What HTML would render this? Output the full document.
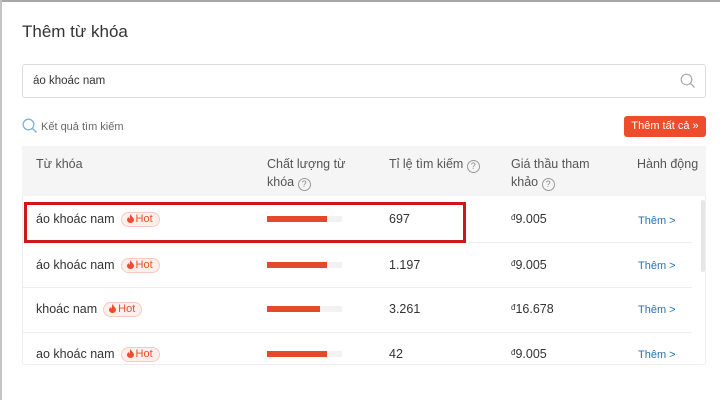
<!DOCTYPE html>
<html><head><meta charset="utf-8"><style>
*{margin:0;padding:0;box-sizing:border-box}
body{width:720px;height:400px;overflow:hidden;background:#fff;font-family:"Liberation Sans",Arial,sans-serif;color:#333;position:relative}
.a{position:absolute;white-space:nowrap}
.topbar{left:0;top:0;width:720px;height:2px;background:#a8a8a8}
.leftbar{left:0;top:0;width:2px;height:400px;background:#c4c4c4}
.title{left:22px;top:22px;font-size:17px;color:#333}
.search{left:22px;top:64px;width:684px;height:34px;border:1px solid #ddd;border-radius:3px}
.stext{left:33px;top:75px;font-size:11.5px;color:#333}
.kq{left:41px;top:121px;font-size:11px;color:#666}
.btn{left:624px;top:116px;width:82px;height:21px;background:#ee4d2d;border-radius:3px;color:#fff;font-size:11px;line-height:21px;text-align:center}
.table{left:22px;top:146px;width:684px;height:219px;border:1px solid #eee;border-radius:3px}
.head{left:22px;top:146px;width:684px;height:50px;background:#f5f5f5}
.h{font-size:12.5px;color:#555;line-height:18px}
.q{display:inline-block;width:13px;height:13px;border:1px solid #999;border-radius:50%;font-size:9px;line-height:11px;text-align:center;color:#888;vertical-align:-1px}
.sep{left:22px;width:670px;height:1px;background:#eee}
.cell{font-size:12.5px;color:#333}
.hot{display:inline-block;margin-left:6px;height:15px;padding:0 6px 0 5px;border:1px solid #f6c9bd;border-radius:8px;background:#fdf0ec;color:#ee4d2d;font-size:11px;line-height:13px;vertical-align:1px}
.hot svg{vertical-align:-1px;margin-right:2px}
.bar{height:6px;background:#f2f2f2;width:75px}
.bar i{display:block;height:6px;background:#e4492b}
.them{font-size:11px;color:#2673b8}
.scroll{left:701px;top:200px;width:4px;height:72px;background:#e6e6e6;border-radius:2px}
.red{left:24px;top:202px;width:442px;height:41px;border:3px solid #d0161c}
</style></head><body>
<div class="a topbar"></div><div class="a leftbar"></div>
<div class="a title">Thêm từ khóa</div>
<div class="a search"></div>
<div class="a stext">áo khoác nam</div>
<svg class="a" style="left:680px;top:73px" width="16" height="16" viewBox="0 0 16 16"><circle cx="6.5" cy="6.5" r="5.3" fill="none" stroke="#aaa" stroke-width="1.2"/><path d="M10.5 10.5L14.5 14.5" stroke="#aaa" stroke-width="1.3"/></svg>
<svg class="a" style="left:22px;top:118px" width="16" height="16" viewBox="0 0 16 16"><circle cx="6.5" cy="6.5" r="5.3" fill="none" stroke="#7fb2da" stroke-width="1.3"/><path d="M10.5 10.5L14.5 14.5" stroke="#7fb2da" stroke-width="1.4"/></svg>
<div class="a kq">Kết quả tìm kiếm</div>
<div class="a btn">Thêm tất cả »</div>
<div class="a table"></div>
<div class="a head"></div>
<div class="a h" style="left:36px;top:155px">Từ khóa</div>
<div class="a h" style="left:267px;top:155px">Chất lượng từ<br>khóa <span class="q">?</span></div>
<div class="a h" style="left:389px;top:155px">Tỉ lệ tìm kiếm <span class="q">?</span></div>
<div class="a h" style="left:511px;top:155px">Giá thầu tham<br>khảo <span class="q">?</span></div>
<div class="a h" style="left:637px;top:155px">Hành động</div>

<div class="a cell" style="left:36px;top:212px">áo khoác nam<span class="hot"><svg width="7" height="9" viewBox="0 0 7 9"><path d="M3.5 0C4 2 7 3.5 7 6A3.5 3 0 0 1 0 6C0 4.5 1 3.5 1.5 3C1.7 4 2.3 4.5 2.8 4.5C2.5 3 3 1.5 3.5 0Z" fill="#ee4d2d"/></svg>Hot</span></div>
<div class="a bar" style="left:267px;top:216px"><i style="width:60px"></i></div>
<div class="a cell" style="left:389px;top:212px">697</div>
<div class="a cell" style="left:511px;top:212px"><small style="font-size:8px;vertical-align:3px">đ</small>9.005</div>
<div class="a them" style="left:638px;top:215px">Thêm &gt;</div>
<div class="a sep" style="top:242px"></div>

<div class="a cell" style="left:36px;top:258px">áo khoác nam<span class="hot"><svg width="7" height="9" viewBox="0 0 7 9"><path d="M3.5 0C4 2 7 3.5 7 6A3.5 3 0 0 1 0 6C0 4.5 1 3.5 1.5 3C1.7 4 2.3 4.5 2.8 4.5C2.5 3 3 1.5 3.5 0Z" fill="#ee4d2d"/></svg>Hot</span></div>
<div class="a bar" style="left:267px;top:262px"><i style="width:60px"></i></div>
<div class="a cell" style="left:389px;top:258px">1.197</div>
<div class="a cell" style="left:511px;top:258px"><small style="font-size:8px;vertical-align:3px">đ</small>9.005</div>
<div class="a them" style="left:638px;top:260px">Thêm &gt;</div>
<div class="a sep" style="top:287px"></div>

<div class="a cell" style="left:36px;top:302px">khoác nam<span class="hot"><svg width="7" height="9" viewBox="0 0 7 9"><path d="M3.5 0C4 2 7 3.5 7 6A3.5 3 0 0 1 0 6C0 4.5 1 3.5 1.5 3C1.7 4 2.3 4.5 2.8 4.5C2.5 3 3 1.5 3.5 0Z" fill="#ee4d2d"/></svg>Hot</span></div>
<div class="a bar" style="left:267px;top:306px"><i style="width:53px"></i></div>
<div class="a cell" style="left:389px;top:302px">3.261</div>
<div class="a cell" style="left:511px;top:302px"><small style="font-size:8px;vertical-align:3px">đ</small>16.678</div>
<div class="a them" style="left:638px;top:304px">Thêm &gt;</div>
<div class="a sep" style="top:332px"></div>

<div class="a cell" style="left:36px;top:347px">ao khoác nam<span class="hot"><svg width="7" height="9" viewBox="0 0 7 9"><path d="M3.5 0C4 2 7 3.5 7 6A3.5 3 0 0 1 0 6C0 4.5 1 3.5 1.5 3C1.7 4 2.3 4.5 2.8 4.5C2.5 3 3 1.5 3.5 0Z" fill="#ee4d2d"/></svg>Hot</span></div>
<div class="a bar" style="left:267px;top:351px"><i style="width:60px"></i></div>
<div class="a cell" style="left:389px;top:347px">42</div>
<div class="a cell" style="left:511px;top:347px"><small style="font-size:8px;vertical-align:3px">đ</small>9.005</div>
<div class="a them" style="left:638px;top:349px">Thêm &gt;</div>

<div class="a scroll"></div>
<div class="a red"></div>
</body></html>
